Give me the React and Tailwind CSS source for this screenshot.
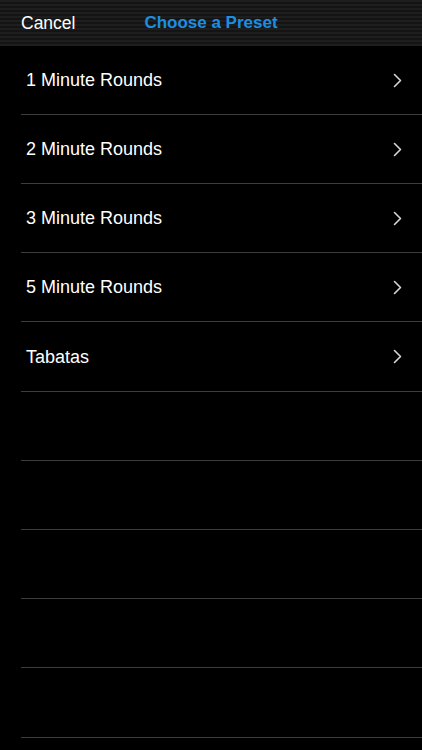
const presets = ['1 Minute Rounds', '2 Minute Rounds', '3 Minute Rounds', '5 Minute Rounds', 'Tabatas'];

// row heights measured from the reference (separators drift by a pixel now and then)
const heights = ['h-[69px]', 'h-[69px]', 'h-[69px]', 'h-[69px]', 'h-[70px]', 'h-[69px]', 'h-[69px]', 'h-[69px]', 'h-[69px]', 'h-[70px]', 'h-[69px]'];

const Chevron = () => (
  <svg width="9" height="15" viewBox="0 0 9 15" fill="none" className="mr-[20px]">
    <path d="M1.5 1.5 L7.5 7.5 L1.5 13.5" stroke="#d6d6d6" strokeWidth="1.6" strokeLinecap="round" strokeLinejoin="round" />
  </svg>
);

const App = () => {
  return (
    <div className="h-[750px] overflow-hidden bg-black font-['Liberation_Sans',Arial,sans-serif]">
      <header className="grid h-[46px] grid-cols-[1fr_auto_1fr] items-center bg-[repeating-linear-gradient(180deg,#1e1e1e_0px,#1e1e1e_2px,#141414_2px,#141414_4px)] px-[21px]">
        <span className="text-[17.5px] text-white">Cancel</span>
        <span className="text-[17px] font-bold text-[#1d8fe1]">Choose a Preset</span>
        <span />
      </header>

      <ul>
        {heights.map((h, i) => (
          <li key={i} className={`${h} ml-[21px] flex items-center border-b border-[#3c3c3c] pl-[5px]`}>
            {presets[i] && (
              <>
                <span className="flex-1 pt-[1px] text-[18px] text-white">{presets[i]}</span>
                <Chevron />
              </>
            )}
          </li>
        ))}
      </ul>
    </div>
  );
};

export default App;
